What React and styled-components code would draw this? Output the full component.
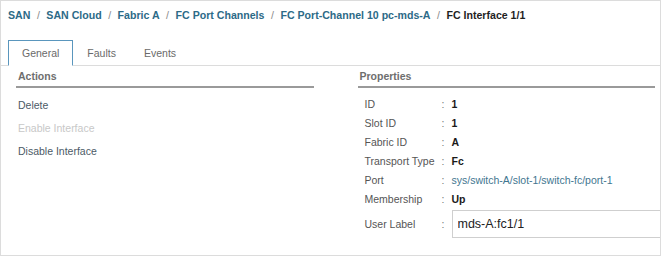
import React from "react";
import styled, { createGlobalStyle } from "styled-components";

const Global = createGlobalStyle`
  html, body { margin: 0; padding: 0; background: #fff; }
  body { font-family: "Liberation Sans", Arial, sans-serif; }
`;

const Frame = styled.div`
  box-sizing: border-box;
  width: 661px;
  height: 256px;
  border: 1px solid #dcdcdc;
  overflow: hidden;
  background: #fff;
`;

const Crumbs = styled.div`
  display: flex;
  align-items: center;
  height: 27px;
  padding-left: 7px;
  font-size: 10.6px;
  font-weight: bold;
  white-space: nowrap;
`;

const Crumb = styled.span`
  color: ${(p) => (p.$current ? "#1f1f1f" : "#2c6a87")};
`;

const Sep = styled.span`
  color: #8a8a8a;
  font-weight: normal;
  margin: 0 6.5px;
`;

const TabBar = styled.div`
  display: flex;
  margin-top: 12px;
  padding-left: 7px;
  border-bottom: 1px solid #dcdcdc;
  height: 25px;
`;

const Tab = styled.div`
  box-sizing: border-box;
  height: 26px;
  padding: 0 13px;
  display: flex;
  align-items: center;
  font-size: 10.5px;
  color: #6a6a6a;
  border: 1px solid transparent;
  ${(p) =>
    p.$active &&
    `
    background: #fff;
    border-color: #5a96bd;
    border-bottom-color: #fff;
  `}
`;

const Columns = styled.div`
  display: grid;
  grid-template-columns: minmax(0, 1fr) minmax(0, 1fr);
  column-gap: 44px;
  padding: 0 5px 0 15px;
`;

const Section = styled.div`
  display: flex;
  flex-direction: column;
  min-width: 0;
`;

const SectionHead = styled.div`
  height: 20px;
  display: flex;
  align-items: center;
  padding-left: 2px;
  font-size: 10.5px;
  font-weight: bold;
  color: #6e6e6e;
  border-bottom: 2px solid #9a9a9a;
`;

const ActionList = styled.div`
  display: flex;
  flex-direction: column;
  gap: 9px;
  padding: 10px 0 0 2px;
`;

const Action = styled.div`
  font-size: 10.5px;
  line-height: 14px;
  color: ${(p) => (p.$disabled ? "#c8c8c8" : "#4c5a66")};
`;

const PropList = styled.div`
  display: flex;
  flex-direction: column;
  padding: 6px 0 0 7px;
`;

const PropRow = styled.div`
  display: grid;
  grid-template-columns: 77px 10px auto;
  align-items: center;
  height: ${(p) => (p.$tall ? "28px" : "19.1px")};
  margin-top: ${(p) => (p.$tall ? "1px" : "0")};
  font-size: 10.5px;
`;

const Label = styled.span`
  color: #555;
  white-space: nowrap;
`;

const Colon = styled.span`
  color: #777;
`;

const Value = styled.span`
  color: ${(p) => (p.$link ? "#3f7690" : "#1a1a1a")};
  font-weight: ${(p) => (p.$link ? "normal" : "bold")};
  white-space: nowrap;
`;

const Input = styled.input`
  box-sizing: border-box;
  width: 230px;
  height: 28px;
  border: 1px solid #cfcfcf;
  padding: 0 5px;
  font-family: "Liberation Sans", Arial, sans-serif;
  font-size: 12.5px;
  color: #222;
  outline: none;
`;

const crumbs = [
  "SAN",
  "SAN Cloud",
  "Fabric A",
  "FC Port Channels",
  "FC Port-Channel 10 pc-mds-A",
  "FC Interface 1/1",
];

const props = [
  ["ID", "1"],
  ["Slot ID", "1"],
  ["Fabric ID", "A"],
  ["Transport Type", "Fc"],
  ["Port", "sys/switch-A/slot-1/switch-fc/port-1", true],
  ["Membership", "Up"],
];

export default function App() {
  return (
    <Frame>
      <Global />
      <Crumbs>
        {crumbs.map((c, i) => (
          <React.Fragment key={c}>
            {i > 0 && <Sep>/</Sep>}
            <Crumb $current={i === crumbs.length - 1}>{c}</Crumb>
          </React.Fragment>
        ))}
      </Crumbs>
      <TabBar>
        <Tab $active>General</Tab>
        <Tab>Faults</Tab>
        <Tab>Events</Tab>
      </TabBar>
      <Columns>
        <Section>
          <SectionHead>Actions</SectionHead>
          <ActionList>
            <Action>Delete</Action>
            <Action $disabled>Enable Interface</Action>
            <Action>Disable Interface</Action>
          </ActionList>
        </Section>
        <Section>
          <SectionHead>Properties</SectionHead>
          <PropList>
            {props.map(([k, v, link]) => (
              <PropRow key={k}>
                <Label>{k}</Label>
                <Colon>:</Colon>
                <Value $link={link}>{v}</Value>
              </PropRow>
            ))}
            <PropRow $tall>
              <Label>User Label</Label>
              <Colon>:</Colon>
              <Input defaultValue="mds-A:fc1/1" />
            </PropRow>
          </PropList>
        </Section>
      </Columns>
    </Frame>
  );
}
